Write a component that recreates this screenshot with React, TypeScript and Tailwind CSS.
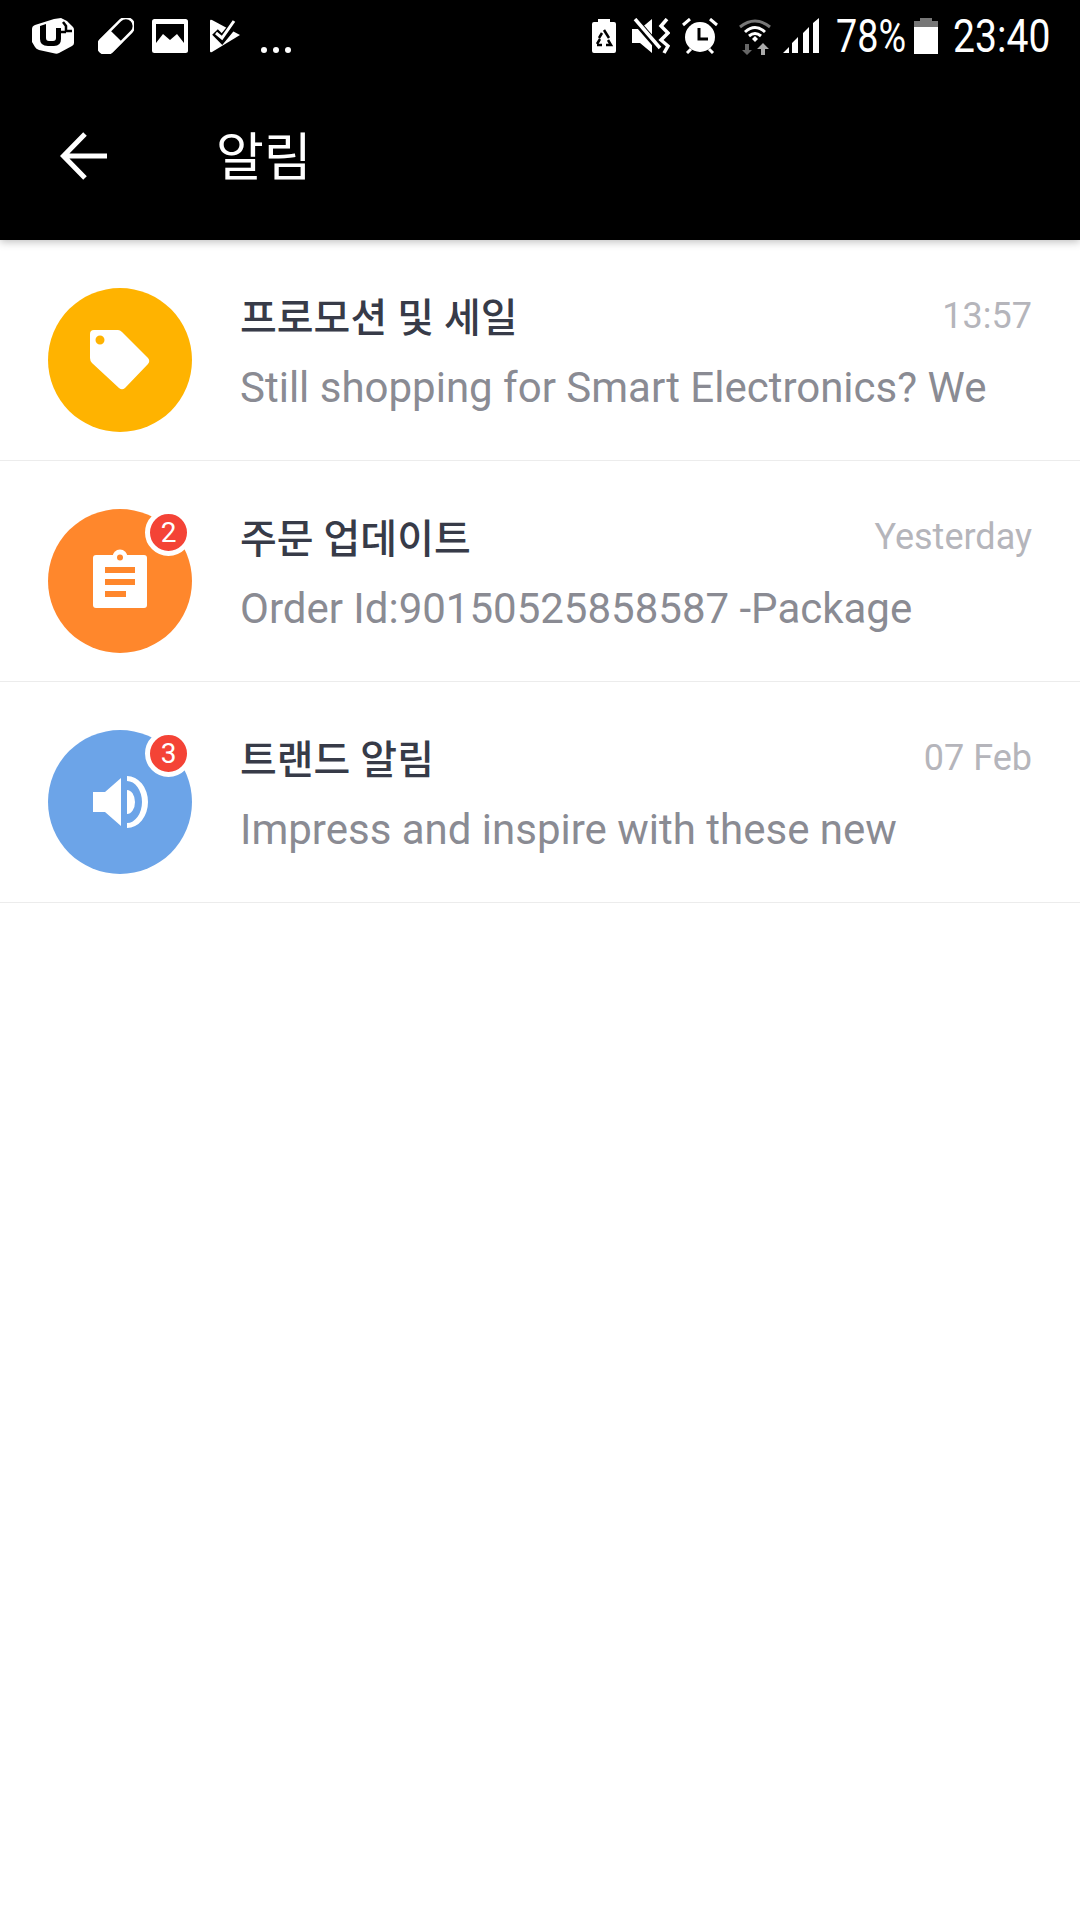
const cjk = "font-['Roboto','Noto_Sans_CJK_KR',sans-serif]";

function StatusLeft() {
  return (
    <div className="flex items-center">
      {/* carrier logo */}
      <svg width="42" height="36" viewBox="0 0 42 36" className="ml-[32px]">
        <path d="M3 7 L22 1 L29 0 L35 3 L41 9 Q42 10 42 12 V25 Q42 27 40 28 L27 35 Q25 36 23 35.500 L7 32 Q4 31 3 29 L0 24 V11 Q0 8 3 7 Z" fill="#fff" />
        <path d="M8 8 V21 Q8 28 16 28 H22 Q29 28 29 21 V10 H24 V20 Q24 23 21 23 H17 Q14 23 14 20 V6 Z" fill="#000" />
        <path d="M31 4 L34 8 V13 H40 M29 14 H34" stroke="#000" strokeWidth="2.5" fill="none" />
      </svg>
      {/* pill */}
      <svg width="36" height="36" viewBox="0 0 36 36" className="ml-[24px]">
        <g transform="rotate(-45 18 18)">
          <rect x="-4" y="10" width="44" height="16" rx="8" fill="#000" stroke="#fff" strokeWidth="2.500" />
          <path d="M18 9 H4.500 A9 9 0 0 0 4.500 27 H18 Z" fill="#fff" />
        </g>
      </svg>
      {/* picture */}
      <svg width="36" height="34" viewBox="0 0 36 34" className="ml-[18px]">
        <rect width="36" height="34" rx="2.500" fill="#fff" />
        <path d="M4 5 H32 V24 L25 15 L18 21 L11 15 L4 24 Z" fill="#000" />
      </svg>
      {/* task check */}
      <svg width="30" height="34" viewBox="0 0 30 34" className="ml-[22px]">
        <path d="M0 2 Q0 0 2 1 L30 16 L2 33 Q0 34 0 32 Z" fill="#fff" />
        <path d="M5 13 L12 20 L26 3" stroke="#000" strokeWidth="8" fill="none" />
        <path d="M6 14 L12 19 L24 2" stroke="#fff" strokeWidth="3" fill="none" />
      </svg>
      {/* overflow dots */}
      <div className="ml-[21px] mt-[28px] flex gap-[6px]">
        <span className="size-[6px] rounded-full bg-white" />
        <span className="size-[6px] rounded-full bg-white" />
        <span className="size-[6px] rounded-full bg-white" />
      </div>
    </div>
  );
}

function StatusRight() {
  return (
    <div className="flex items-center pr-[31px]">
      {/* battery saver */}
      <svg width="24" height="34" viewBox="0 0 24 34">
        <path d="M0 5 Q0 3 2 3 H6 V0 H18 V3 H22 Q24 3 24 5 V32 Q24 34 22 34 H2 Q0 34 0 32 Z" fill="#fff" />
        <path d="M12 11 L17 19 M7 19 L10 14 M5 25 L8 20 M5 26 H10 M14 26 H19 L16 21" stroke="#000" strokeWidth="2.500" fill="none" />
      </svg>
      {/* vibrate mute */}
      <svg width="38" height="36" viewBox="0 0 38 36" className="ml-[16px]">
        <path d="M0 11 H8 L20 1 V35 L8 25 H0 Z" fill="#fff" />
        <path d="M1 0 L27 30" stroke="#000" strokeWidth="7" />
        <path d="M3 1 L28 30" stroke="#fff" strokeWidth="3.500" />
        <path d="M35 1 L29 8 L36 15 L29 22 L36 28 L32 35" stroke="#fff" strokeWidth="3.500" fill="none" />
      </svg>
      {/* alarm */}
      <svg width="36" height="36" viewBox="0 0 36 36" className="ml-[12px]">
        <circle cx="18" cy="19" r="15" fill="#fff" />
        <path d="M17 10 V21 H26" stroke="#000" strokeWidth="3" fill="none" />
        <path d="M1 7 L8 1 M35 7 L28 1 M5 35 L9 31 M31 35 L27 31" stroke="#fff" strokeWidth="3" />
      </svg>
      {/* wifi with dim arcs */}
      <svg width="32" height="37" viewBox="0 0 32 37" className="ml-[21px]">
        <path d="M1 9 Q16 -3 31 9" stroke="#777" strokeWidth="3" fill="none" />
        <path d="M6 14 Q16 5 26 14" stroke="#fff" strokeWidth="3" fill="none" />
        <path d="M10 18 Q16 13 22 18" stroke="#fff" strokeWidth="3" fill="none" />
        <path d="M13 21 L16 18 L19 21 L16 24 Z" fill="#fff" />
        <path d="M6 26 H10 V32 H13 L8 37 L3 32 H6 Z" fill="#666" />
        <path d="M22 37 H26 V31 H30 L24 25 L18 31 H22 Z" fill="#aaa" />
      </svg>
      {/* signal */}
      <svg width="36" height="36" viewBox="0 0 36 36" className="ml-[12px]">
        <path d="M0 35 L6 29 V35 Z M9 35 V25 L15 19 V35 Z M20 35 V15 L26 9 V35 Z M30 35 V5 L36 0 V35 Z" fill="#fff" />
      </svg>
      <span className="ml-[17px] inline-block w-[68px] origin-left scale-x-[0.82] whitespace-nowrap font-['Roboto',sans-serif] text-[46px] leading-none text-white">
        78%
      </span>
      {/* battery */}
      <svg width="24" height="36" viewBox="0 0 24 36" className="ml-[10px]">
        <path d="M6 0 H18 V3 H24 V36 H0 V3 H6 Z" fill="#fff" />
        <path d="M6 0 H18 V3 H24 V9 H0 V3 H6 Z" fill="#777" />
      </svg>
      <span className="ml-[15px] inline-block w-[96px] origin-left scale-x-[0.85] whitespace-nowrap font-['Roboto',sans-serif] text-[46px] leading-none text-white">
        23:40
      </span>
    </div>
  );
}

type Row = {
  title: string;
  time: string;
  body: string;
  color: string;
  badge?: string;
  icon: React.ReactNode;
};

const rows: Row[] = [
  {
    title: "프로모션 및 세일",
    time: "13:57",
    body: "Still shopping for Smart Electronics? We",
    color: "bg-[#ffb300]",
    icon: (
      <svg width="60" height="60" viewBox="0 0 60 60">
        <path
          fillRule="evenodd"
          d="M4 0 H28 Q30 0 32 2 L58 28 Q60.500 31 58 34 L35 58 Q32 60.500 29 58 L2 33 Q0 31 0 28 V4 Q0 0 4 0 Z M10 5.500 A4.500 4.500 0 1 0 10 14.500 A4.500 4.500 0 1 0 10 5.500 Z"
          fill="#fff"
        />
      </svg>
    ),
  },
  {
    title: "주문 업데이트",
    time: "Yesterday",
    body: "Order Id:90150525858587 -Package",
    color: "bg-[#ff872c]",
    badge: "2",
    icon: (
      <svg width="54" height="59" viewBox="0 0 54 59" className="mb-[6px]">
        <rect y="6" width="54" height="53" rx="3" fill="#fff" />
        <circle cx="27" cy="8" r="7.500" fill="#fff" />
        <circle cx="27" cy="8.500" r="3" fill="#ff872c" />
        <path d="M12 18 H42 V24 H12 Z M12 30 H42 V36 H12 Z M12 42 H33 V48 H12 Z" fill="#ff872c" />
      </svg>
    ),
  },
  {
    title: "트랜드 알림",
    time: "07 Feb",
    body: "Impress and inspire with these new",
    color: "bg-[#6ca4e8]",
    badge: "3",
    icon: (
      <svg width="55" height="52" viewBox="0 0 55 52">
        <path d="M0 16 H12 L28 2 V50 L12 36 H0 Z" fill="#fff" />
        <path d="M34 0 A21 26 0 0 1 34 52 V47 A15 21 0 0 0 34 5 Z" fill="#fff" />
        <path d="M34 14 A8 12 0 0 1 34 38 Z" fill="#fff" />
      </svg>
    ),
  },
];

function NotificationRow({ row }: { row: Row }) {
  return (
    <div className="flex h-[221px] items-start border-b border-[#ececec] pl-[48px] pr-[48px] pt-[48px]">
      <div className={`relative flex size-[144px] shrink-0 items-center justify-center rounded-full ${row.color}`}>
        {row.icon}
        {row.badge && (
          <span className="absolute right-0 top-0 flex size-[47px] items-center justify-center rounded-full border-[5px] border-white bg-[#f44336] font-['Roboto',sans-serif] text-[28px] leading-none text-white">
            {row.badge}
          </span>
        )}
      </div>
      <div className="ml-[48px] mt-[6px] min-w-0 flex-1">
        <div className="flex items-start justify-between">
          <span className={`${cjk} text-[40px] font-medium leading-[50px] text-[#373b48]`}>{row.title}</span>
          <span className="font-['Roboto',sans-serif] text-[36px] leading-[44px] text-[#b5b5bb]">{row.time}</span>
        </div>
        <p className="mt-[19px] whitespace-nowrap font-['Roboto',sans-serif] text-[42px] leading-[50px] text-[#8a8b93]">
          {row.body}
        </p>
      </div>
    </div>
  );
}

export default function App() {
  return (
    <div className="flex h-[1920px] w-[1080px] flex-col overflow-hidden bg-white">
      <header className="relative z-10 h-[240px] shrink-0 bg-black shadow-[0_2px_8px_rgba(0,0,0,0.25)]">
        <div className="flex h-[72px] items-center justify-between">
          <StatusLeft />
          <StatusRight />
        </div>
        <div className="flex h-[168px] items-center">
          <svg width="48" height="48" viewBox="0 0 48 48" className="ml-[60px]">
            <path d="M47 24 H4 M25 2 L3.500 24 L25 46" stroke="#fff" strokeWidth="5" fill="none" />
          </svg>
          <h1 className={`${cjk} ml-[108px] mt-[5px] text-[52px] font-normal leading-none text-white`}>알림</h1>
        </div>
      </header>
      <main>
        {rows.map((row) => (
          <NotificationRow key={row.title} row={row} />
        ))}
      </main>
    </div>
  );
}
